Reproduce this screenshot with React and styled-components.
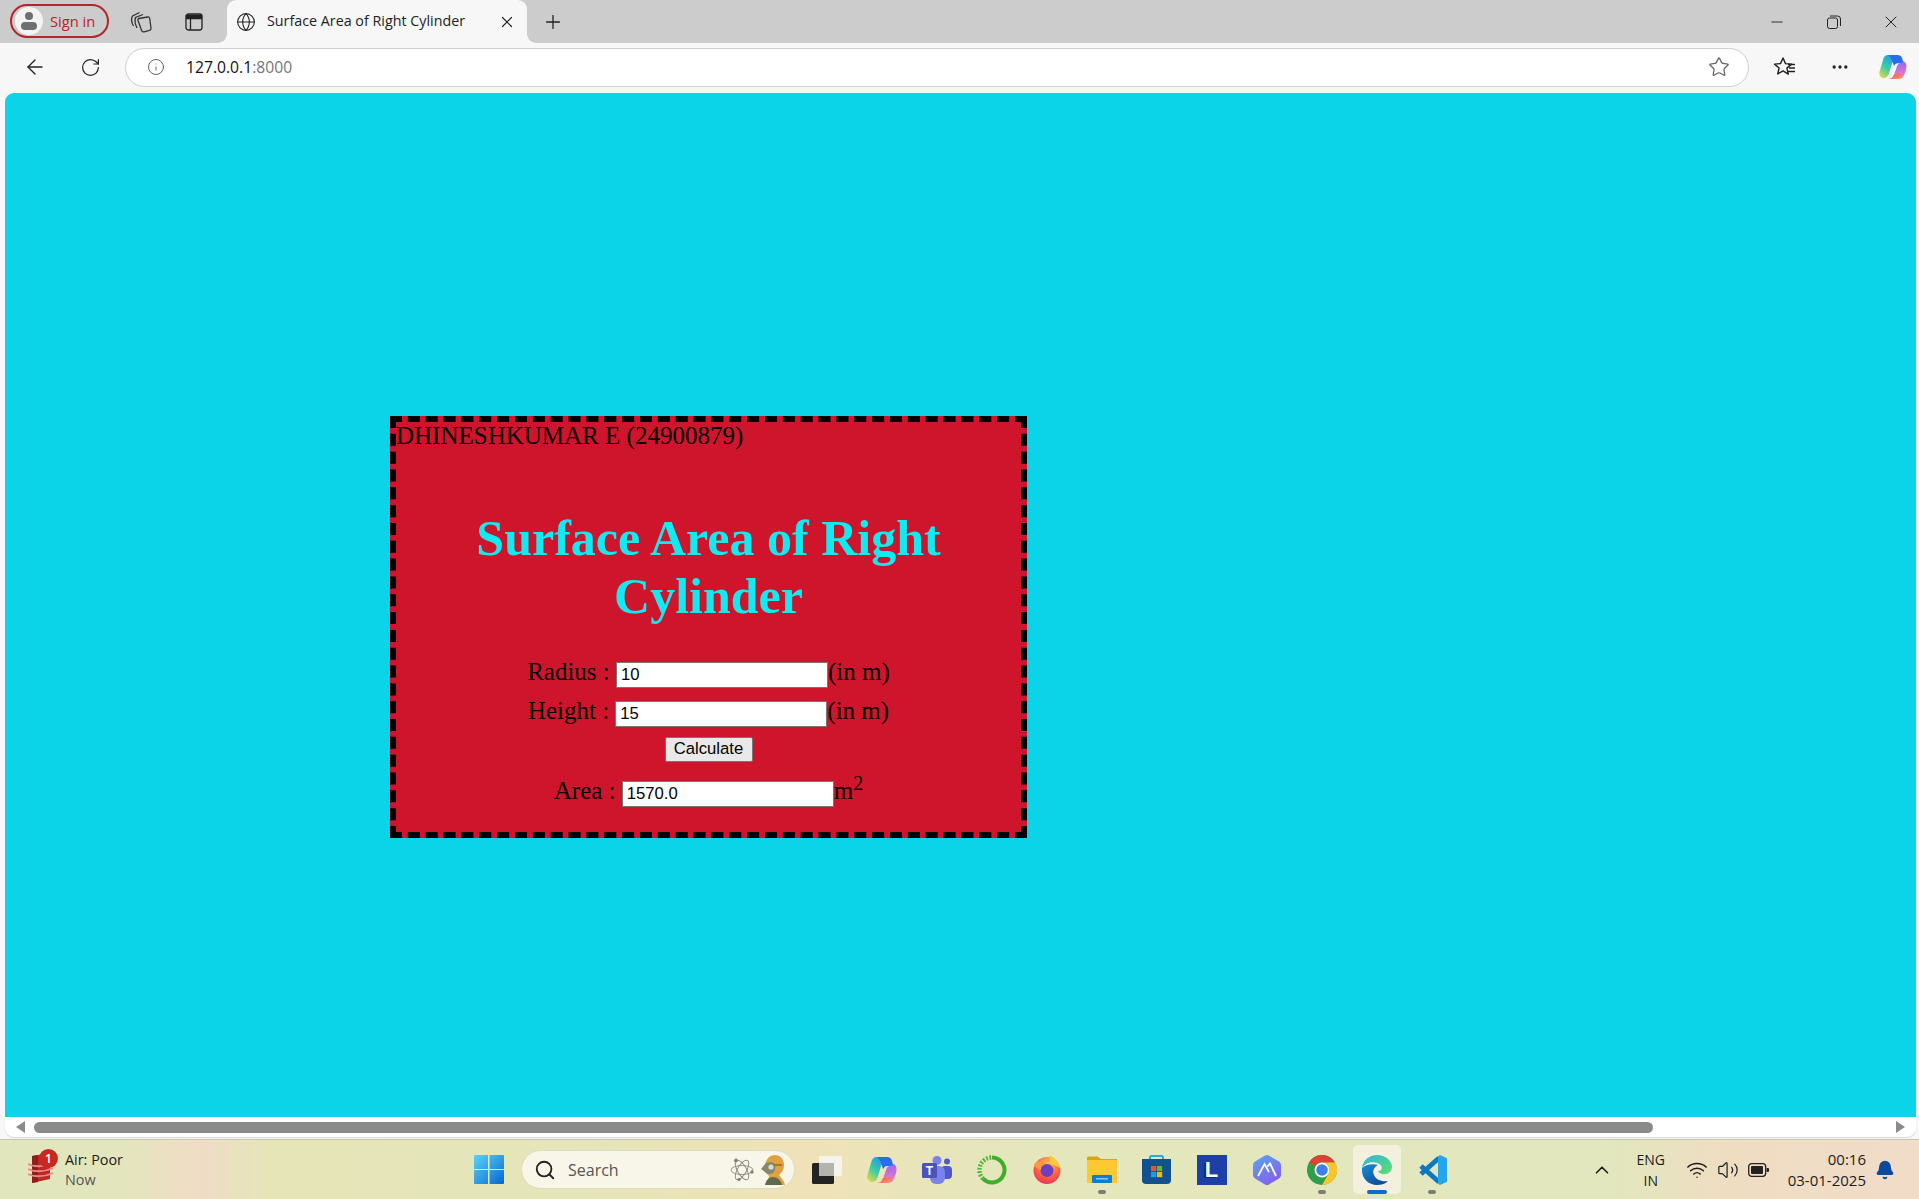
import React from "react";
import styled, { createGlobalStyle } from "styled-components";
import {
  ArrowLeft,
  RotateCw,
  Info,
  Star,
  Plus,
  X,
  Minus,
  Globe,
  MoreHorizontal,
  Search,
  ChevronUp,
  Wifi,
  Volume2,
  Bell,
} from "lucide-react";

const GlobalStyle = createGlobalStyle`
  html, body {
    margin: 0;
    padding: 0;
    height: 100%;
    overflow: hidden;
    background: #f7f7f7;
    font-family: "Open Sans", "Noto Sans", sans-serif;
  }
  * { box-sizing: border-box; }
`;

const Screen = styled.div`
  width: 1919px;
  height: 1199px;
  display: flex;
  flex-direction: column;
`;

/* ---- browser chrome ---- */

const TabStrip = styled.div`
  height: 43px;
  background: #cccccc;
  display: flex;
  align-items: center;
  padding-left: 10px;
  color: #222;
`;

const SignIn = styled.div`
  width: 99px;
  height: 34px;
  margin-bottom: 1px;
  border: 2px solid #b3262b;
  border-radius: 18px;
  display: flex;
  align-items: center;
  gap: 7px;
  padding-left: 3px;
  font-size: 14.7px;
  color: #b3262b;
`;

const SignInLabel = styled.span`
  margin-bottom: 1px;
`;

const Avatar = styled.div`
  width: 28px;
  height: 28px;
  border-radius: 50%;
  background: #f3f3f3;
  display: flex;
  align-items: center;
  justify-content: center;
`;

const StripButton = styled.div`
  width: 53px;
  height: 32px;
  display: flex;
  align-items: center;
  justify-content: center;
`;

const StripGroup = styled.div`
  display: flex;
  margin: 0 7px 0 5px;
`;

const ActiveTab = styled.div`
  position: relative;
  width: 300px;
  height: 43px;
  background: #f7f7f7;
  border-radius: 9px 9px 0 0;
  display: flex;
  align-items: center;
  padding: 0 11px 0 9px;
  font-size: 14.3px;
  color: #222;
  &::before,
  &::after {
    content: "";
    position: absolute;
    bottom: 0;
    width: 9px;
    height: 9px;
  }
  &::before {
    left: -9px;
    background: radial-gradient(circle at 0 0, transparent 8.5px, #f7f7f7 9px);
  }
  &::after {
    right: -9px;
    background: radial-gradient(circle at 100% 0, transparent 8.5px, #f7f7f7 9px);
  }
`;

const TabTitle = styled.span`
  margin: 0 0 2px 11px;
  flex: 1;
  white-space: nowrap;
`;

const NewTab = styled.div`
  margin-left: 15px;
  display: flex;
`;

const WindowButtons = styled.div`
  margin-left: auto;
  display: flex;
`;

const WindowButton = styled.div`
  width: 57px;
  height: 43px;
  display: flex;
  align-items: center;
  justify-content: center;
`;

const Toolbar = styled.div`
  height: 50px;
  background: #f7f7f7;
  display: flex;
  align-items: center;
  padding: 0 0 2px 10px;
`;

const NavButton = styled.div`
  width: ${(p) => p.$w || 55}px;
  height: 36px;
  display: flex;
  align-items: center;
  justify-content: center;
  color: #222;
`;

const AddressBar = styled.div`
  width: 1624px;
  height: 39px;
  margin-left: 5px;
  background: #fff;
  border: 1px solid #cfcfcf;
  border-radius: 20px;
  display: flex;
  align-items: center;
  padding: 0 18px 0 21px;
  font-size: 15.7px;
`;

const UrlHost = styled.span`
  margin-left: 21px;
  color: #111;
`;

const UrlPort = styled.span`
  color: #767676;
`;

const AddressEnd = styled.div`
  margin-left: auto;
  display: flex;
`;

const CopilotSlot = styled.div`
  margin-left: 20px;
  display: flex;
`;

/* ---- page ---- */

const Viewport = styled.div`
  flex: 1;
  background: #f7f7f7;
  padding: 0 3px 2px 5px;
  display: flex;
  flex-direction: column;
  border-bottom: 1px solid #c4c6b0;
`;

const Page = styled.main`
  flex: 1;
  background: #0bd3e8;
  border-radius: 9px 9px 0 0;
  padding: 323px 0 0 385px;
`;

const Card = styled.section`
  width: 637px;
  height: 422px;
  background: #cf152b;
  border: 6px dashed #000;
  font-family: "Liberation Serif", serif;
  font-size: 25px;
  color: #000;
  line-height: 29px;
`;

const Author = styled.div`
  line-height: 27px;
  white-space: nowrap;
`;

const Heading = styled.h1`
  margin: 60px 0 32px;
  font-size: 50px;
  font-weight: 700;
  line-height: 58px;
  color: #10eaf2;
  text-align: center;
`;

const FormRow = styled.div`
  height: ${(p) => p.$h || 39}px;
  text-align: center;
  white-space: nowrap;
`;

const ValueInput = styled.input`
  width: 212px;
  height: 26px;
  padding: 1px 4px;
  border: 1.5px solid #767676;
  background: #fff;
  font-family: "Liberation Sans", sans-serif;
  font-size: 16.67px;
  color: #000;
  vertical-align: baseline;
  outline: none;
`;

const CalcButton = styled.button`
  width: 88px;
  height: 25px;
  padding: 0;
  border: 1.5px solid #767676;
  border-radius: 2px;
  background: #e9e9e9;
  font-family: "Liberation Sans", sans-serif;
  font-size: 16.67px;
  color: #000;
`;

const Sup = styled.sup`
  font-size: 20px;
  line-height: 0;
`;

/* ---- scrollbar ---- */

const ScrollBar = styled.div`
  height: 20px;
  background: #fff;
  border-radius: 0 0 9px 9px;
  display: flex;
  align-items: center;
  padding: 0 11px;
  box-shadow: 0 1px 1px #d8d8d8;
`;

const ScrollArrow = styled.div`
  width: 0;
  height: 0;
  border-top: 6px solid transparent;
  border-bottom: 6px solid transparent;
  ${(p) =>
    p.$right
      ? "border-left: 9px solid #8a8a8a; margin-left: auto;"
      : "border-right: 9px solid #8a8a8a;"}
`;

const ScrollThumb = styled.div`
  width: 1619px;
  height: 11px;
  margin-left: 9px;
  border-radius: 6px;
  background: #8a8a8a;
`;

/* ---- taskbar ---- */

const Taskbar = styled.footer`
  height: 59px;
  display: flex;
  align-items: center;
  background: linear-gradient(
    90deg,
    #e2e6bd 0%,
    #e3e6bd 6%,
    #f0dcc6 10.5%,
    #e5e5b8 14%,
    #e4e5b9 30%,
    #f0e2b8 42%,
    #e5e6bc 52%,
    #e2e7bd 84%,
    #efddc2 90%,
    #f1dcc8 100%
  );
  color: #1c1c1c;
`;

const Widget = styled.div`
  width: 457px;
  display: flex;
  align-items: center;
  padding-left: 28px;
`;

const WidgetIcon = styled.div`
  position: relative;
  width: 25px;
  height: 44px;
  padding-top: 5px;
`;

const Badge = styled.span`
  position: absolute;
  top: 1px;
  left: 11px;
  width: 19px;
  height: 19px;
  border-radius: 50%;
  background: #c92a20;
  color: #fff;
  font-size: 12px;
  font-weight: 600;
  line-height: 19px;
  text-align: center;
`;

const WidgetText = styled.div`
  margin-left: 12px;
  font-size: 14.4px;
  line-height: 20px;
`;

const WidgetSub = styled.div`
  color: #555;
`;

const StartButton = styled.div`
  width: 64px;
  display: flex;
  justify-content: center;
`;

const SearchBox = styled.div`
  width: 274px;
  height: 39px;
  border-radius: 20px;
  background: #f8f6e9;
  border: 1px solid #dcdcc0;
  display: flex;
  align-items: center;
  padding-left: 12px;
  font-size: 16px;
  color: #555;
`;

const SearchLabel = styled.span`
  margin-left: 12px;
`;

const SearchArt = styled.div`
  margin-left: auto;
  display: flex;
  align-items: center;
  gap: 7px;
  padding-right: 9px;
`;

const Apps = styled.div`
  display: flex;
  margin-left: 4px;
`;

const AppSlot = styled.div`
  position: relative;
  width: 48px;
  height: 49px;
  margin: 0 3.5px;
  border-radius: 5px;
  display: flex;
  align-items: center;
  justify-content: center;
  background: ${(p) => (p.$active ? "#f3f1de" : "transparent")};
`;

const RunDot = styled.span`
  position: absolute;
  bottom: 0;
  left: 50%;
  transform: translateX(-50%);
  height: 4px;
  border-radius: 2px;
  width: ${(p) => (p.$active ? 20 : 8)}px;
  background: ${(p) => (p.$active ? "#0a6cce" : "#7d7d75")};
`;

const Tray = styled.div`
  margin-left: auto;
  display: flex;
  align-items: center;
  padding-right: 24px;
`;

const Lang = styled.div`
  width: 40px;
  margin-left: 18px;
  font-size: 14px;
  line-height: 21px;
  text-align: center;
`;

const TrayIcons = styled.div`
  display: flex;
  align-items: center;
  gap: 9px;
  margin-left: 15px;
`;

const Clock = styled.div`
  margin-left: 19px;
  font-size: 15px;
  line-height: 21px;
  text-align: right;
`;

const BellWrap = styled.div`
  margin-left: 9px;
  display: flex;
`;

const LetterTile = styled.div`
  width: 30px;
  height: 30px;
  background: #1c3fa8;
  color: #fff;
  font-family: "Liberation Sans", sans-serif;
  font-size: 22px;
  font-weight: 700;
  line-height: 30px;
  text-align: center;
  text-shadow: -2px 1px 0 #0c2a70;
`;

const RestoreIcon = () => (
  <svg width="14" height="14" viewBox="0 0 14 14" fill="none" stroke="#222" strokeWidth="1">
    <rect x="0.5" y="3" width="10" height="10.5" rx="2" />
    <path d="M3 1h7.5a3 3 0 0 1 3 3v7" />
  </svg>
);

const CollectionsIcon = () => (
  <svg width="22" height="22" viewBox="0 0 22 22" fill="none" stroke="#333" strokeWidth="1.3">
    <path d="M9 7.500l8.500-1.500c1.200-.2 2 .4 2.200 1.500l1.300 9.500c.2 1.200-.4 2-1.500 2.300l-5.500 1.500c-1.200.3-2-.2-2.400-1.300L8 9.500c-.3-1 0-1.800 1-2z" />
    <path d="M7 17C5 13 4.500 10 5.500 6.500L13 3.500" />
    <path d="M3.500 15C1 11 1 8 2.500 5L9.500 1.500" />
  </svg>
);

const TabsIcon = () => (
  <svg width="18" height="18" viewBox="0 0 18 18" fill="none" stroke="#222" strokeWidth="1.3">
    <rect x="1" y="1" width="16" height="16" rx="2.5" />
    <path d="M1.500 2.500h15v3h-15z" fill="#222" />
    <path d="M5.500 5v12" />
  </svg>
);

const PersonIcon = () => (
  <svg width="18" height="20" viewBox="0 0 18 20" fill="#6f6f6f">
    <circle cx="9" cy="5" r="4" />
    <rect x="1" y="11" width="16" height="8" rx="4" />
  </svg>
);

const FavoritesIcon = () => (
  <svg width="24" height="22" viewBox="0 0 24 22" fill="none" stroke="#222" strokeWidth="1.4">
    <path d="M10 2l2.500 5.600 6 .5-4.600 4 1.400 6-5.300-3.200L4.700 18l1.400-6L1.500 8.100l6-.5z" strokeLinejoin="round" />
    <path d="M15 8.500h7M16 12h6M15 15.500h7" />
  </svg>
);

const CopilotIcon = ({ id, width = 28, height = 26 }) => (
  <svg width={width} height={height} viewBox="0 0 30 28">
    <defs>
      <linearGradient id={`${id}L`} x1="0.7" y1="0" x2="0.1" y2="1">
        <stop offset="0" stopColor="#1a9bea" />
        <stop offset="0.55" stopColor="#3ccfa0" />
        <stop offset="1" stopColor="#ecd84a" />
      </linearGradient>
      <linearGradient id={`${id}R`} x1="0.5" y1="0" x2="0.6" y2="1">
        <stop offset="0" stopColor="#8f6cf0" />
        <stop offset="0.55" stopColor="#d070d8" />
        <stop offset="1" stopColor="#f28a9c" />
      </linearGradient>
      <linearGradient id={`${id}B`} x1="0" y1="0" x2="1" y2="1">
        <stop offset="0" stopColor="#f0503c" />
        <stop offset="1" stopColor="#fa9a78" />
      </linearGradient>
    </defs>
    <path d="M9 1h10l-5 9-3 10c-.8 3-2.500 6-6 6-3.500 0-5.500-3-4.500-7L4 7c.8-3.500 2.500-6 5-6z" fill={`url(#${id}L)`} />
    <path d="M19 27H11c2.500 0 4-1.500 5-4l3-9c.8-2.500 2-4 4-4 1 0 1.500-.5 2-1l1-1c2 0 3.800 2.500 3.500 6-.3 4-2 8-3.500 10.500-1.300 2-3.500 2.500-7 2.500z" fill={`url(#${id}R)`} />
    <path d="M9 1h11c2.500 0 4.500 1.500 5 4l1 3.500C25 9.500 24 10 23 10h-3c-1.800 0-3 1.500-4 3l-1-3c-.6-2-1-3-2-5-.8-1.800-2-4-4-4z" fill="#2a6cee" />
    <path d="M9 27h10c2.500 0 4-1.200 5-3.500L25 21c-1 .6-2 .8-3 .8h-4c-1.500 0-2.500.8-3 2.200-.7 2-2.500 3-6 3z" fill={`url(#${id}B)`} />
  </svg>
);

const AirIcon = () => (
  <svg width="25" height="30" viewBox="0 0 25 30">
    <path d="M4 3l18-3v26L4 30z" fill="#b92a26" />
    <path d="M4 3l6-1v27l-6 1z" fill="#8f1d1c" />
    <path d="M0 11c7 3 16 3 25-1M0 16c7 3 16 3 25-1M0 21c7 3 16 3 25-1" stroke="#ee8583" strokeWidth="1.800" fill="none" />
  </svg>
);

const WindowsLogo = () => (
  <svg width="30" height="29" viewBox="0 0 30 29">
    <defs>
      <linearGradient id="winA" x1="0" y1="0" x2="1" y2="1" gradientUnits="userSpaceOnUse" gradientTransform="scale(30 29)">
        <stop offset="0" stopColor="#5ad4fc" />
        <stop offset="1" stopColor="#0668cc" />
      </linearGradient>
    </defs>
    <path d="M1 0h13v14H0V1a1 1 0 0 1 1-1zM15.500 0H29a1 1 0 0 1 1 1v13H15.500zM0 15h14v14H1a1 1 0 0 1-1-1zM15.500 15H30v13a1 1 0 0 1-1 1H15.500z" fill="url(#winA)" />
  </svg>
);

const AtomIcon = () => (
  <svg width="24" height="26" viewBox="0 0 24 26" fill="none" stroke="#8a8a80" strokeWidth="0.900">
    <ellipse cx="12" cy="13" rx="11" ry="4.500" />
    <ellipse cx="12" cy="13" rx="11" ry="4.500" transform="rotate(60 12 13)" />
    <ellipse cx="12" cy="13" rx="11" ry="4.500" transform="rotate(120 12 13)" />
    <circle cx="6" cy="3.500" r="1.600" fill="#77776f" />
    <circle cx="22" cy="15" r="1.300" fill="#77776f" />
    <circle cx="9" cy="22.500" r="1.300" fill="#77776f" />
  </svg>
);

const BustIcon = () => (
  <svg width="24" height="30" viewBox="0 0 24 30">
    <path d="M4 10C5 4 9 0 14 0s9 4 9 10-3 8-5 10c2 3 5 5 6 10H6c0-4 2-6 2-9C5 18 3 14 4 10z" fill="#e0a23e" />
    <path d="M0 14l5-6c3-1 7-1 9 1 1 3 0 7-2 9-3 2-7 1-8-1z" fill="#85866c" />
    <circle cx="10" cy="12" r="2.600" fill="#cfe0dc" />
    <path d="M4 30c1-5 4-8 8-8 5 0 8 4 9 8z" fill="#5f6a48" />
    <path d="M13 10h8" stroke="#a8742a" strokeWidth="2" />
  </svg>
);

const CubeAppIcon = () => (
  <svg width="30" height="28" viewBox="0 0 30 28">
    <rect x="0" y="7" width="22" height="21" rx="1.500" fill="#232323" />
    <rect x="7" y="0" width="23" height="20" rx="1.500" fill="#f4f4ee" />
    <rect x="7" y="7" width="15" height="13" fill="#b4b4ae" />
  </svg>
);

const TeamsIcon = () => (
  <svg width="30" height="28" viewBox="0 0 30 28">
    <circle cx="25" cy="5.500" r="3" fill="#5059c9" />
    <rect x="19" y="10" width="11" height="13" rx="4" fill="#5059c9" />
    <circle cx="15" cy="4.500" r="4.500" fill="#7b83eb" />
    <rect x="8" y="10" width="15" height="18" rx="6" fill="#7b83eb" />
    <rect x="0" y="7" width="15" height="15" rx="1.500" fill="#4b53bc" />
    <text x="7.500" y="19" fill="#fff" fontFamily="Liberation Sans, sans-serif" fontSize="12" fontWeight="700" textAnchor="middle">
      T
    </text>
  </svg>
);

const RingIcon = () => (
  <svg width="30" height="30" viewBox="0 0 30 30" fill="none">
    <path d="M15 2.500A12.500 12.500 0 1 1 6 23.700" stroke="#3fae2a" strokeWidth="4" />
    <path d="M6 23.700A12.500 12.500 0 0 1 15 2.500" stroke="#4db838" strokeWidth="4.500" strokeDasharray="1.800 1.500" />
  </svg>
);

const FirefoxIcon = () => (
  <svg width="28" height="29" viewBox="0 0 28 29">
    <defs>
      <radialGradient id="ffA" cx="0.55" cy="0.25" r="0.85">
        <stop offset="0" stopColor="#ffbd4f" />
        <stop offset="0.5" stopColor="#ff6a3d" />
        <stop offset="1" stopColor="#e8245f" />
      </radialGradient>
    </defs>
    <circle cx="14" cy="15.500" r="13.500" fill="url(#ffA)" />
    <path d="M17 0c5 3 9 8 10.500 13L16 8z" fill="#ffc93a" />
    <circle cx="14" cy="15.500" r="6.500" fill="#6a3fc0" />
    <path d="M1 9c3-3 7-3 10-2-2 1-4 3-3 6 2 3-5 2-7-4z" fill="#ff9a3a" />
  </svg>
);

const FolderIcon = () => (
  <svg width="30" height="27" viewBox="0 0 30 27">
    <path d="M0 2A1.500 1.500 0 0 1 1.500.5h9L14 3h16v4H0z" fill="#dba511" />
    <rect x="0" y="4" width="30" height="23" rx="1" fill="#fcc934" />
    <rect x="5" y="19" width="20" height="8" rx="1" fill="#0a7fd0" />
    <rect x="9" y="22" width="12" height="1.500" fill="#7ec8f2" />
  </svg>
);

const StoreIcon = () => (
  <svg width="29" height="29" viewBox="0 0 29 29">
    <path d="M8 5V2.500A1.500 1.500 0 0 1 9.500 1h10A1.500 1.500 0 0 1 21 2.500V5" fill="none" stroke="#2aa8e0" strokeWidth="2" />
    <path d="M0 4h29v21a4 4 0 0 1-4 4H4a4 4 0 0 1-4-4z" fill="#12508f" />
    <rect x="9" y="11" width="5.200" height="5.200" fill="#e8562a" />
    <rect x="15" y="11" width="5.200" height="5.200" fill="#6fb52c" />
    <rect x="9" y="17" width="5.200" height="5.200" fill="#18a0e6" />
    <rect x="15" y="17" width="5.200" height="5.200" fill="#f6b614" />
  </svg>
);

const HexIcon = () => (
  <svg width="28" height="30" viewBox="0 0 28 30">
    <defs>
      <linearGradient id="hexA" x1="0" y1="0" x2="0.6" y2="1">
        <stop offset="0" stopColor="#58a8ee" />
        <stop offset="1" stopColor="#8460ec" />
      </linearGradient>
    </defs>
    <path d="M12 .6a4 4 0 0 1 4 0l10 6a4 4 0 0 1 2 3.400v10a4 4 0 0 1-2 3.400l-10 6a4 4 0 0 1-4 0l-10-6A4 4 0 0 1 0 20V10a4 4 0 0 1 2-3.400z" fill="url(#hexA)" />
    <path d="M5 21l6.500-12L16 17M14.500 11.500l2.500-3L23 21" fill="none" stroke="#fff" strokeWidth="1.800" />
  </svg>
);

const ChromeIcon = () => (
  <svg width="30" height="30" viewBox="0 0 30 30">
    <circle cx="15" cy="15" r="15" fill="#2f9e4a" />
    <path d="M15 0a15 15 0 0 1 13 7.500H15a7.500 7.500 0 0 0-6.500 3.750L2 7.500A15 15 0 0 1 15 0z" fill="#dd4233" />
    <path d="M28 7.500A15 15 0 0 1 15 30l6.500-11.250A7.500 7.500 0 0 0 15 7.500z" fill="#fbc62c" />
    <circle cx="15" cy="15" r="7.500" fill="#fff" />
    <circle cx="15" cy="15" r="5.800" fill="#3d7fe6" />
  </svg>
);

const EdgeIcon = () => (
  <svg width="30" height="30" viewBox="0 0 30 30">
    <defs>
      <linearGradient id="edgeA" x1="0" y1="0" x2="1" y2="0.8">
        <stop offset="0" stopColor="#2fb4e4" />
        <stop offset="1" stopColor="#58dc72" />
      </linearGradient>
      <linearGradient id="edgeB" x1="0" y1="0" x2="0.8" y2="1">
        <stop offset="0" stopColor="#1a8fd8" />
        <stop offset="1" stopColor="#0b4692" />
      </linearGradient>
    </defs>
    <path d="M15 0C7 0 1 5.500 0 13c3-4.500 8-6.500 13-5.500 6 1 8 4.500 6 7.500-1 1-2 1-3 .8 1 3 5 4 9 3 3-1 5-4 5-6.800C30 5.500 23 0 15 0z" fill="url(#edgeA)" />
    <path d="M0 13c-1 9 5 17 15 17 4 0 8-1 11-4-6 1-12-1-14-6-2-4 0-8 4-10-6-2-13 0-16 3z" fill="url(#edgeB)" />
  </svg>
);

const VsCodeIcon = () => (
  <svg width="30" height="30" viewBox="0 0 30 30" fill="none">
    <path d="M22 3L4 19M4 11l18 16" stroke="#0a78c4" strokeWidth="5" />
    <path d="M21 1.500L23 0l7 3.200v23.600L23 30l-2-1.500z" fill="#25a5ea" />
  </svg>
);

const BatteryIcon = () => (
  <svg width="21" height="14" viewBox="0 0 21 14">
    <rect x="0.700" y="0.700" width="17" height="12.600" rx="3" fill="none" stroke="#222" strokeWidth="1.300" />
    <rect x="3" y="3" width="12" height="8" rx="1" fill="#222" />
    <rect x="18.500" y="5" width="2.500" height="4" rx="1" fill="#222" />
  </svg>
);

const apps = [
  { key: "cube", icon: <CubeAppIcon /> },
  { key: "copilot", icon: <CopilotIcon id="copTask" width={30} height={28} /> },
  { key: "teams", icon: <TeamsIcon /> },
  { key: "ring", icon: <RingIcon /> },
  { key: "firefox", icon: <FirefoxIcon /> },
  { key: "folder", icon: <FolderIcon />, running: true },
  { key: "store", icon: <StoreIcon /> },
  { key: "letter", icon: <LetterTile>L</LetterTile> },
  { key: "hex", icon: <HexIcon /> },
  { key: "chrome", icon: <ChromeIcon />, running: true },
  { key: "edge", icon: <EdgeIcon />, running: true, active: true },
  { key: "vscode", icon: <VsCodeIcon />, running: true },
];

export default function App() {
  return (
    <Screen>
      <GlobalStyle />
      <TabStrip>
        <SignIn>
          <Avatar>
            <PersonIcon />
          </Avatar>
          <SignInLabel>Sign in</SignInLabel>
        </SignIn>
        <StripGroup>
          <StripButton>
            <CollectionsIcon />
          </StripButton>
          <StripButton>
            <TabsIcon />
          </StripButton>
        </StripGroup>
        <ActiveTab>
          <Globe size={20} strokeWidth={1.3} />
          <TabTitle>Surface Area of Right Cylinder</TabTitle>
          <X size={18} strokeWidth={1.6} />
        </ActiveTab>
        <NewTab>
          <Plus size={22} strokeWidth={1.4} />
        </NewTab>
        <WindowButtons>
          <WindowButton>
            <Minus size={18} strokeWidth={1.2} />
          </WindowButton>
          <WindowButton>
            <RestoreIcon />
          </WindowButton>
          <WindowButton>
            <X size={20} strokeWidth={1.2} />
          </WindowButton>
        </WindowButtons>
      </TabStrip>

      <Toolbar>
        <NavButton $w={50}>
          <ArrowLeft size={24} strokeWidth={1.4} />
        </NavButton>
        <NavButton $w={60}>
          <RotateCw size={21} strokeWidth={1.4} />
        </NavButton>
        <AddressBar>
          <Info size={18} strokeWidth={1.2} color="#555" />
          <UrlHost>127.0.0.1</UrlHost>
          <UrlPort>:8000</UrlPort>
          <AddressEnd>
            <Star size={22} strokeWidth={1.4} color="#666" />
          </AddressEnd>
        </AddressBar>
        <NavButton $w={72}>
          <FavoritesIcon />
        </NavButton>
        <NavButton $w={38}>
          <MoreHorizontal size={20} strokeWidth={2} />
        </NavButton>
        <CopilotSlot>
          <CopilotIcon id="copBar" />
        </CopilotSlot>
      </Toolbar>

      <Viewport>
        <Page>
          <Card>
            <Author>DHINESHKUMAR E (24900879)</Author>
            <Heading>
              Surface Area of Right
              <br />
              Cylinder
            </Heading>
            <FormRow>
              Radius : <ValueInput defaultValue="10" />
              (in m)
            </FormRow>
            <FormRow $h={35}>
              Height : <ValueInput defaultValue="15" />
              (in m)
            </FormRow>
            <FormRow $h={45}>
              <CalcButton>Calculate</CalcButton>
            </FormRow>
            <FormRow>
              Area : <ValueInput defaultValue="1570.0" />
              m<Sup>2</Sup>
            </FormRow>
          </Card>
        </Page>
        <ScrollBar>
          <ScrollArrow />
          <ScrollThumb />
          <ScrollArrow $right />
        </ScrollBar>
      </Viewport>

      <Taskbar>
        <Widget>
          <WidgetIcon>
            <AirIcon />
            <Badge>1</Badge>
          </WidgetIcon>
          <WidgetText>
            <div>Air: Poor</div>
            <WidgetSub>Now</WidgetSub>
          </WidgetText>
        </Widget>
        <StartButton>
          <WindowsLogo />
        </StartButton>
        <SearchBox>
          <Search size={22} strokeWidth={2} color="#222" />
          <SearchLabel>Search</SearchLabel>
          <SearchArt>
            <AtomIcon />
            <BustIcon />
          </SearchArt>
        </SearchBox>
        <Apps>
          {apps.map((a) => (
            <AppSlot key={a.key} $active={a.active}>
              {a.icon}
              {a.running && <RunDot $active={a.active} />}
            </AppSlot>
          ))}
        </Apps>
        <Tray>
          <ChevronUp size={22} strokeWidth={1.8} />
          <Lang>
            ENG
            <br />
            IN
          </Lang>
          <TrayIcons>
            <Wifi size={22} strokeWidth={1.6} />
            <Volume2 size={22} strokeWidth={1.3} />
            <BatteryIcon />
          </TrayIcons>
          <Clock>
            00:16
            <br />
            03-01-2025
          </Clock>
          <BellWrap>
            <Bell size={20} fill="#0a4a9c" color="#0a4a9c" />
          </BellWrap>
        </Tray>
      </Taskbar>
    </Screen>
  );
}
